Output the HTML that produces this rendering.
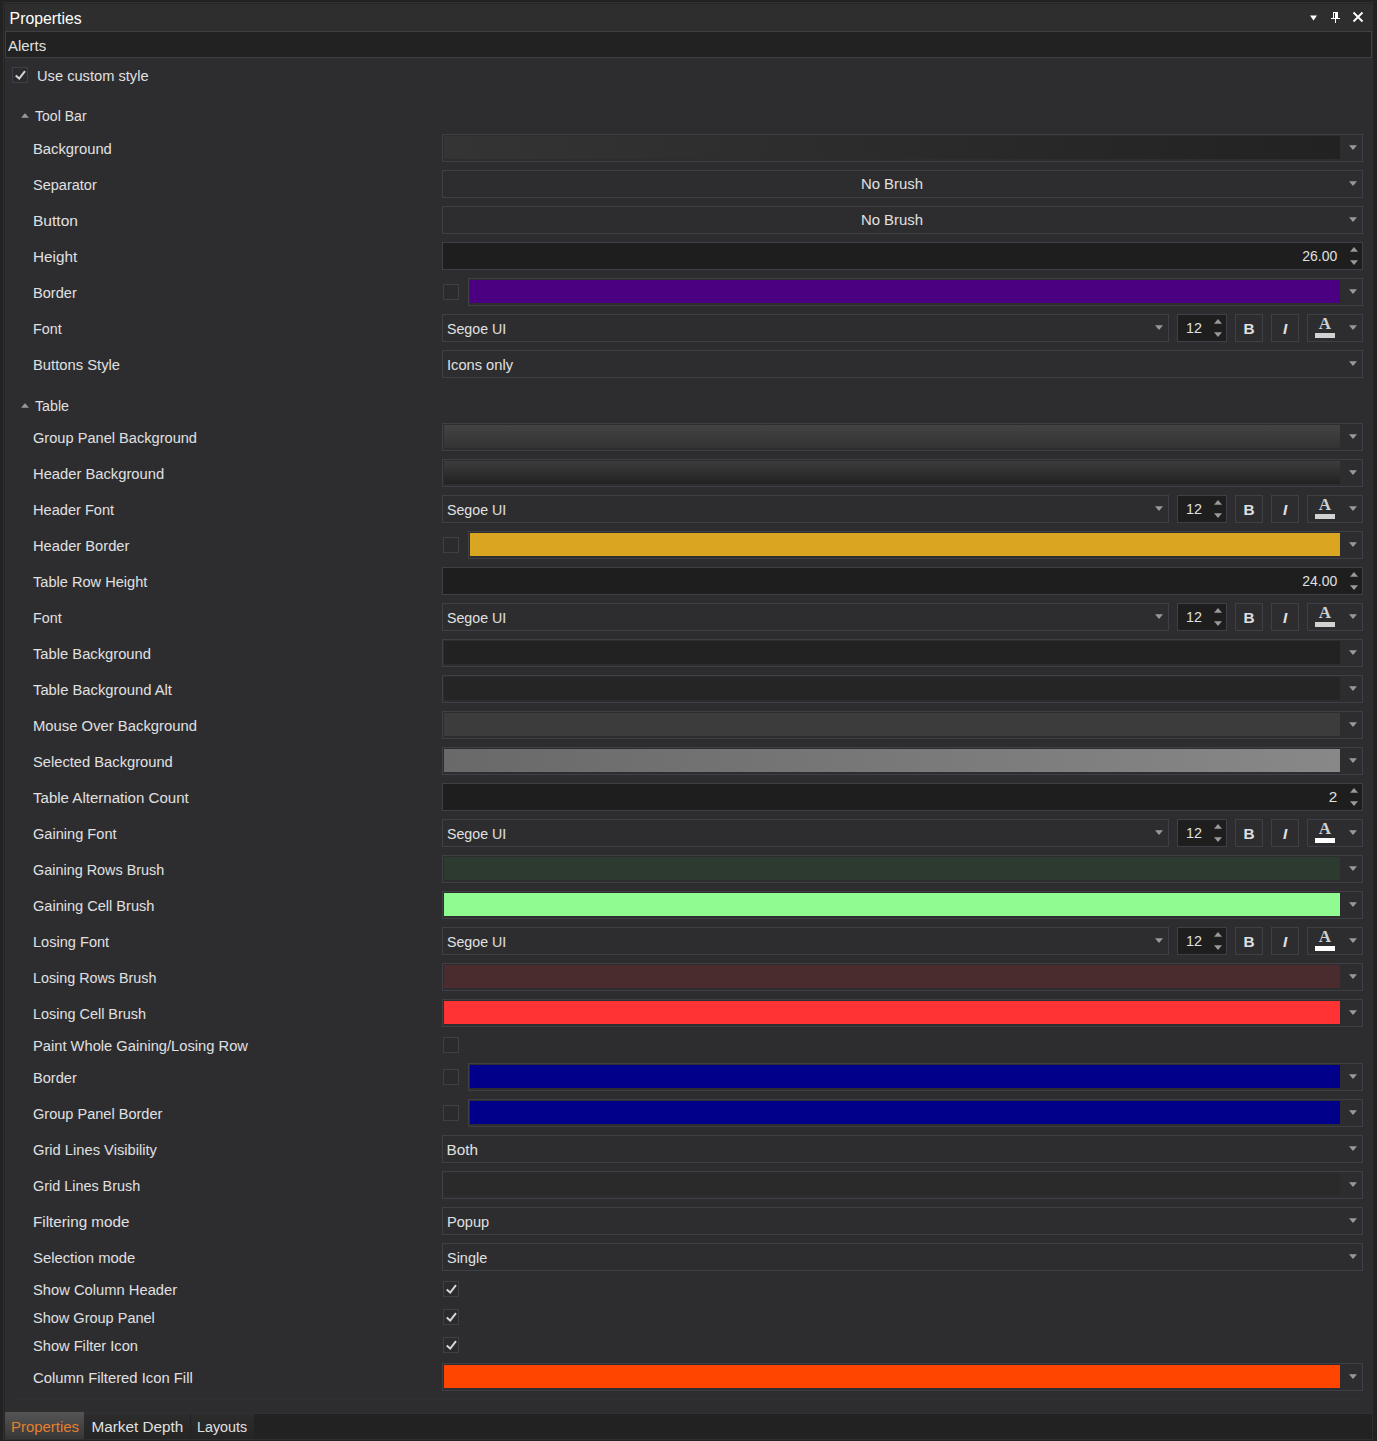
<!DOCTYPE html>
<html><head><meta charset="utf-8"><title>Properties</title>
<style>
html,body{margin:0;padding:0}
body{width:1377px;height:1441px;background:#222222;position:relative;overflow:hidden;
 font-family:"Liberation Sans",sans-serif;font-size:15.3px;color:#e0e0e0}
#fr{position:absolute;left:3px;top:2px;width:1368px;height:1436px;border:1px solid #2f2f2f;background:#2d2d30}
#in{position:absolute;left:4px;top:3px;width:1368px;height:1436px;border-left:1px solid #252525;border-top:1px solid #252525;box-sizing:border-box}
#tb{position:absolute;left:5px;top:4px;width:1367px;height:27px;background:#2e2e2e}
#tt{position:absolute;left:9.6px;top:5px;height:28px;line-height:28px;font-size:15.8px;color:#ffffff;transform-origin:0 50%;white-space:nowrap}
#al{position:absolute;left:5px;top:31px;width:1365px;height:25px;border:1px solid #3f3f46;background:#222222}
#al div{position:absolute;left:2px;top:0;line-height:27px;color:#e0e0e0;transform-origin:0 50%;white-space:nowrap}
.lb{position:absolute;height:28px;line-height:29px;white-space:nowrap;transform-origin:0 50%}
.bx{position:absolute;height:26px;border:1px solid #3f3f46}
.sp{background:#1e1e1e}
.sw{position:absolute;left:1px;top:1px;right:22px;bottom:2px}
.tx{position:absolute;left:3.5px;top:-0.3px;line-height:27px;white-space:nowrap;transform-origin:0 50%}
.ct{position:absolute;left:1px;right:22px;top:-1.3px;text-align:center;line-height:27px}
.rt{position:absolute;top:-0.6px;line-height:27px;transform-origin:100% 50%}
.bt{text-align:center;line-height:27px}
.fa{position:absolute;left:7px;width:20px;text-align:center;top:0px;font-family:"Liberation Serif",serif;font-weight:bold;font-size:17px;line-height:17px;color:#d0d0d0}
.fb{position:absolute;left:7px;top:18px;width:20px;height:5px;background:#d9d9d9}
.ad{position:absolute;display:block}
.cb{position:absolute;width:14px;height:14px;border:1px solid #3f3f46;background:#2b2b2e}
.cb svg{position:absolute;left:0;top:0}
#st{position:absolute;left:5px;top:1414px;width:1367px;height:25px;background:#222222}
#sl{position:absolute;left:5px;top:1413px;width:1367px;height:1px;background:#313134}
#bl{position:absolute;left:3px;top:1439px;width:1370px;height:1px;background:#2f2f2f}
.tab{position:absolute;top:1414px;height:25px;background:linear-gradient(#2c2c2c,#252525)}
.tab span{position:absolute;top:0;white-space:nowrap;transform-origin:0 50%}
#t1{left:5px;top:1412px;width:79px;height:27px;background:linear-gradient(#555555,#363636);color:#e57f2e}
#sepl{position:absolute;left:18px;top:1398px;width:1340px;height:2px;background:#303033}
</style></head><body>
<div id="fr"></div><div id="in"></div>
<div id="tb"></div><div id="tt" style="transform:scaleX(1.0000)">Properties</div>

<svg class="ad" style="left:1309px;top:14.5px" width="9" height="6" viewBox="0 0 9 6"><path d="M1 0.5H8L4.5 5.5Z" fill="#fff"/></svg>
<svg class="ad" style="left:1330px;top:11px" width="11" height="13" viewBox="0 0 11 13"><path d="M3 1H8V7H3Z M4 2V7H5V2Z" fill="#fff" fill-rule="evenodd"/><rect x="1" y="7" width="9" height="1" fill="#fff"/><rect x="5" y="8" width="1" height="4" fill="#fff"/></svg>
<svg class="ad" style="left:1352px;top:11px" width="12" height="12" viewBox="0 0 12 12"><path d="M1.5 1.5L10.5 10.5M10.5 1.5L1.5 10.5" stroke="#fff" stroke-width="1.8" fill="none"/></svg>
<div id="al"><div style="transform:scaleX(0.9744)">Alerts</div></div>
<div class="cb" style="left:12px;top:67px"><svg width="14" height="14" viewBox="0 0 14 14"><path d="M2.7 7.6L6.2 10.6L12 3.2" fill="none" stroke="#d6d6d6" stroke-width="2"/></svg></div>
<div class="lb" style="left:37px;top:61px;transform:scaleX(0.9578)">Use custom style</div>
<svg class="ad" style="left:21.3px;top:113px" width="8" height="5" viewBox="0 0 8 5"><path d="M0 4.8H8L4 0.3Z" fill="#999999"/></svg>
<div class="lb" style="left:35px;top:101px;transform:scaleX(0.9193)">Tool Bar</div>
<div class="lb" style="left:33.3px;top:134px;transform:scaleX(0.9654)">Background</div><div class="bx" style="left:442px;top:134px;width:919px"><div class="sw" style="background:linear-gradient(90deg,#343434,#222222)"></div></div><svg class="ad" style="left:1349px;top:145px" width="8" height="5" viewBox="0 0 8 5"><path d="M0 0.2H8L4 5Z" fill="#999999"/></svg>
<div class="lb" style="left:33.3px;top:170px;transform:scaleX(0.9493)">Separator</div><div class="bx" style="left:442px;top:170px;width:919px"><div class="ct" style="transform:scaleX(0.9758)">No Brush</div></div><svg class="ad" style="left:1349px;top:181px" width="8" height="5" viewBox="0 0 8 5"><path d="M0 0.2H8L4 5Z" fill="#999999"/></svg>
<div class="lb" style="left:33.3px;top:206px;transform:scaleX(1.0163)">Button</div><div class="bx" style="left:442px;top:206px;width:919px"><div class="ct" style="transform:scaleX(0.9758)">No Brush</div></div><svg class="ad" style="left:1349px;top:217px" width="8" height="5" viewBox="0 0 8 5"><path d="M0 0.2H8L4 5Z" fill="#999999"/></svg>
<div class="lb" style="left:33.3px;top:242px;transform:scaleX(0.9977)">Height</div><div class="bx sp" style="left:442px;top:242px;width:919px"><div class="rt" style="right:24.8px;transform:scaleX(0.9132)">26.00</div></div><svg class="ad" style="left:1350px;top:246.5px" width="8" height="5" viewBox="0 0 8 5"><path d="M0 4.8H8L4 0Z" fill="#999999"/></svg><svg class="ad" style="left:1350px;top:259.5px" width="8" height="5" viewBox="0 0 8 5"><path d="M0 0.2H8L4 5Z" fill="#999999"/></svg>
<div class="lb" style="left:33.3px;top:278px;transform:scaleX(0.9543)">Border</div><div class="cb" style="left:443px;top:284px"></div><div class="bx" style="left:468px;top:278px;width:893px"><div class="sw" style="background:#4b0082"></div></div><svg class="ad" style="left:1349px;top:289px" width="8" height="5" viewBox="0 0 8 5"><path d="M0 0.2H8L4 5Z" fill="#999999"/></svg>
<div class="lb" style="left:33.3px;top:314px;transform:scaleX(0.9355)">Font</div><div class="bx" style="left:442px;top:314px;width:725px"><div class="tx" style="transform:scaleX(0.9286)">Segoe UI</div></div><svg class="ad" style="left:1155px;top:325px" width="8" height="5" viewBox="0 0 8 5"><path d="M0 0.2H8L4 5Z" fill="#999999"/></svg><div class="bx sp" style="left:1177px;top:314px;width:48px"><div class="rt" style="right:24px;transform:scaleX(0.9375)">12</div></div><svg class="ad" style="left:1214px;top:318.5px" width="8" height="5" viewBox="0 0 8 5"><path d="M0 4.8H8L4 0Z" fill="#999999"/></svg><svg class="ad" style="left:1214px;top:331.5px" width="8" height="5" viewBox="0 0 8 5"><path d="M0 0.2H8L4 5Z" fill="#999999"/></svg><div class="bx bt" style="left:1235px;top:314px;width:26px"><b>B</b></div><div class="bx bt" style="left:1271px;top:314px;width:26px"><b><i>I</i></b></div><div class="bx" style="left:1307px;top:314px;width:54px"><div class="fa">A</div><div class="fb" style="background:#d2d2d2"></div></div><svg class="ad" style="left:1349px;top:325px" width="8" height="5" viewBox="0 0 8 5"><path d="M0 0.2H8L4 5Z" fill="#999999"/></svg>
<div class="lb" style="left:33.3px;top:350px;transform:scaleX(0.9663)">Buttons Style</div><div class="bx" style="left:442px;top:350px;width:919px"><div class="tx" style="transform:scaleX(0.9580)">Icons only</div></div><svg class="ad" style="left:1349px;top:361px" width="8" height="5" viewBox="0 0 8 5"><path d="M0 0.2H8L4 5Z" fill="#999999"/></svg>
<svg class="ad" style="left:21.3px;top:403px" width="8" height="5" viewBox="0 0 8 5"><path d="M0 4.8H8L4 0.3Z" fill="#999999"/></svg>
<div class="lb" style="left:35px;top:391px;transform:scaleX(0.9306)">Table</div>
<div class="lb" style="left:33.3px;top:423px;transform:scaleX(0.9547)">Group Panel Background</div><div class="bx" style="left:442px;top:423px;width:919px"><div class="sw" style="background:linear-gradient(180deg,#434343,#333333)"></div></div><svg class="ad" style="left:1349px;top:434px" width="8" height="5" viewBox="0 0 8 5"><path d="M0 0.2H8L4 5Z" fill="#999999"/></svg>
<div class="lb" style="left:33.3px;top:459px;transform:scaleX(0.9637)">Header Background</div><div class="bx" style="left:442px;top:459px;width:919px"><div class="sw" style="background:linear-gradient(180deg,#3c3c3c,#222222)"></div></div><svg class="ad" style="left:1349px;top:470px" width="8" height="5" viewBox="0 0 8 5"><path d="M0 0.2H8L4 5Z" fill="#999999"/></svg>
<div class="lb" style="left:33.3px;top:495px;transform:scaleX(0.9541)">Header Font</div><div class="bx" style="left:442px;top:495px;width:725px"><div class="tx" style="transform:scaleX(0.9286)">Segoe UI</div></div><svg class="ad" style="left:1155px;top:506px" width="8" height="5" viewBox="0 0 8 5"><path d="M0 0.2H8L4 5Z" fill="#999999"/></svg><div class="bx sp" style="left:1177px;top:495px;width:48px"><div class="rt" style="right:24px;transform:scaleX(0.9375)">12</div></div><svg class="ad" style="left:1214px;top:499.5px" width="8" height="5" viewBox="0 0 8 5"><path d="M0 4.8H8L4 0Z" fill="#999999"/></svg><svg class="ad" style="left:1214px;top:512.5px" width="8" height="5" viewBox="0 0 8 5"><path d="M0 0.2H8L4 5Z" fill="#999999"/></svg><div class="bx bt" style="left:1235px;top:495px;width:26px"><b>B</b></div><div class="bx bt" style="left:1271px;top:495px;width:26px"><b><i>I</i></b></div><div class="bx" style="left:1307px;top:495px;width:54px"><div class="fa">A</div><div class="fb" style="background:#d2d2d2"></div></div><svg class="ad" style="left:1349px;top:506px" width="8" height="5" viewBox="0 0 8 5"><path d="M0 0.2H8L4 5Z" fill="#999999"/></svg>
<div class="lb" style="left:33.3px;top:531px;transform:scaleX(0.9610)">Header Border</div><div class="cb" style="left:443px;top:537px"></div><div class="bx" style="left:468px;top:531px;width:893px"><div class="sw" style="background:#daa520"></div></div><svg class="ad" style="left:1349px;top:542px" width="8" height="5" viewBox="0 0 8 5"><path d="M0 0.2H8L4 5Z" fill="#999999"/></svg>
<div class="lb" style="left:33.3px;top:567px;transform:scaleX(0.9537)">Table Row Height</div><div class="bx sp" style="left:442px;top:567px;width:919px"><div class="rt" style="right:24.8px;transform:scaleX(0.9132)">24.00</div></div><svg class="ad" style="left:1350px;top:571.5px" width="8" height="5" viewBox="0 0 8 5"><path d="M0 4.8H8L4 0Z" fill="#999999"/></svg><svg class="ad" style="left:1350px;top:584.5px" width="8" height="5" viewBox="0 0 8 5"><path d="M0 0.2H8L4 5Z" fill="#999999"/></svg>
<div class="lb" style="left:33.3px;top:603px;transform:scaleX(0.9355)">Font</div><div class="bx" style="left:442px;top:603px;width:725px"><div class="tx" style="transform:scaleX(0.9286)">Segoe UI</div></div><svg class="ad" style="left:1155px;top:614px" width="8" height="5" viewBox="0 0 8 5"><path d="M0 0.2H8L4 5Z" fill="#999999"/></svg><div class="bx sp" style="left:1177px;top:603px;width:48px"><div class="rt" style="right:24px;transform:scaleX(0.9375)">12</div></div><svg class="ad" style="left:1214px;top:607.5px" width="8" height="5" viewBox="0 0 8 5"><path d="M0 4.8H8L4 0Z" fill="#999999"/></svg><svg class="ad" style="left:1214px;top:620.5px" width="8" height="5" viewBox="0 0 8 5"><path d="M0 0.2H8L4 5Z" fill="#999999"/></svg><div class="bx bt" style="left:1235px;top:603px;width:26px"><b>B</b></div><div class="bx bt" style="left:1271px;top:603px;width:26px"><b><i>I</i></b></div><div class="bx" style="left:1307px;top:603px;width:54px"><div class="fa">A</div><div class="fb" style="background:#d2d2d2"></div></div><svg class="ad" style="left:1349px;top:614px" width="8" height="5" viewBox="0 0 8 5"><path d="M0 0.2H8L4 5Z" fill="#999999"/></svg>
<div class="lb" style="left:33.3px;top:639px;transform:scaleX(0.9631)">Table Background</div><div class="bx" style="left:442px;top:639px;width:919px"><div class="sw" style="background:#222222"></div></div><svg class="ad" style="left:1349px;top:650px" width="8" height="5" viewBox="0 0 8 5"><path d="M0 0.2H8L4 5Z" fill="#999999"/></svg>
<div class="lb" style="left:33.3px;top:675px;transform:scaleX(0.9669)">Table Background Alt</div><div class="bx" style="left:442px;top:675px;width:919px"><div class="sw" style="background:#252525"></div></div><svg class="ad" style="left:1349px;top:686px" width="8" height="5" viewBox="0 0 8 5"><path d="M0 0.2H8L4 5Z" fill="#999999"/></svg>
<div class="lb" style="left:33.3px;top:711px;transform:scaleX(0.9690)">Mouse Over Background</div><div class="bx" style="left:442px;top:711px;width:919px"><div class="sw" style="background:#3c3c3c"></div></div><svg class="ad" style="left:1349px;top:722px" width="8" height="5" viewBox="0 0 8 5"><path d="M0 0.2H8L4 5Z" fill="#999999"/></svg>
<div class="lb" style="left:33.3px;top:747px;transform:scaleX(0.9611)">Selected Background</div><div class="bx" style="left:442px;top:747px;width:919px"><div class="sw" style="background:linear-gradient(90deg,#696969,#888888)"></div></div><svg class="ad" style="left:1349px;top:758px" width="8" height="5" viewBox="0 0 8 5"><path d="M0 0.2H8L4 5Z" fill="#999999"/></svg>
<div class="lb" style="left:33.3px;top:783px;transform:scaleX(0.9843)">Table Alternation Count</div><div class="bx sp" style="left:442px;top:783px;width:919px"><div class="rt" style="right:24.8px">2</div></div><svg class="ad" style="left:1350px;top:787.5px" width="8" height="5" viewBox="0 0 8 5"><path d="M0 4.8H8L4 0Z" fill="#999999"/></svg><svg class="ad" style="left:1350px;top:800.5px" width="8" height="5" viewBox="0 0 8 5"><path d="M0 0.2H8L4 5Z" fill="#999999"/></svg>
<div class="lb" style="left:33.3px;top:819px;transform:scaleX(0.9539)">Gaining Font</div><div class="bx" style="left:442px;top:819px;width:725px"><div class="tx" style="transform:scaleX(0.9286)">Segoe UI</div></div><svg class="ad" style="left:1155px;top:830px" width="8" height="5" viewBox="0 0 8 5"><path d="M0 0.2H8L4 5Z" fill="#999999"/></svg><div class="bx sp" style="left:1177px;top:819px;width:48px"><div class="rt" style="right:24px;transform:scaleX(0.9375)">12</div></div><svg class="ad" style="left:1214px;top:823.5px" width="8" height="5" viewBox="0 0 8 5"><path d="M0 4.8H8L4 0Z" fill="#999999"/></svg><svg class="ad" style="left:1214px;top:836.5px" width="8" height="5" viewBox="0 0 8 5"><path d="M0 0.2H8L4 5Z" fill="#999999"/></svg><div class="bx bt" style="left:1235px;top:819px;width:26px"><b>B</b></div><div class="bx bt" style="left:1271px;top:819px;width:26px"><b><i>I</i></b></div><div class="bx" style="left:1307px;top:819px;width:54px"><div class="fa">A</div><div class="fb" style="background:#ffffff"></div></div><svg class="ad" style="left:1349px;top:830px" width="8" height="5" viewBox="0 0 8 5"><path d="M0 0.2H8L4 5Z" fill="#999999"/></svg>
<div class="lb" style="left:33.3px;top:855px;transform:scaleX(0.9417)">Gaining Rows Brush</div><div class="bx" style="left:442px;top:855px;width:919px"><div class="sw" style="background:#2d3a30"></div></div><svg class="ad" style="left:1349px;top:866px" width="8" height="5" viewBox="0 0 8 5"><path d="M0 0.2H8L4 5Z" fill="#999999"/></svg>
<div class="lb" style="left:33.3px;top:891px;transform:scaleX(0.9520)">Gaining Cell Brush</div><div class="bx" style="left:442px;top:891px;width:919px"><div class="sw" style="background:#90fb90"></div></div><svg class="ad" style="left:1349px;top:902px" width="8" height="5" viewBox="0 0 8 5"><path d="M0 0.2H8L4 5Z" fill="#999999"/></svg>
<div class="lb" style="left:33.3px;top:927px;transform:scaleX(0.9525)">Losing Font</div><div class="bx" style="left:442px;top:927px;width:725px"><div class="tx" style="transform:scaleX(0.9286)">Segoe UI</div></div><svg class="ad" style="left:1155px;top:938px" width="8" height="5" viewBox="0 0 8 5"><path d="M0 0.2H8L4 5Z" fill="#999999"/></svg><div class="bx sp" style="left:1177px;top:927px;width:48px"><div class="rt" style="right:24px;transform:scaleX(0.9375)">12</div></div><svg class="ad" style="left:1214px;top:931.5px" width="8" height="5" viewBox="0 0 8 5"><path d="M0 4.8H8L4 0Z" fill="#999999"/></svg><svg class="ad" style="left:1214px;top:944.5px" width="8" height="5" viewBox="0 0 8 5"><path d="M0 0.2H8L4 5Z" fill="#999999"/></svg><div class="bx bt" style="left:1235px;top:927px;width:26px"><b>B</b></div><div class="bx bt" style="left:1271px;top:927px;width:26px"><b><i>I</i></b></div><div class="bx" style="left:1307px;top:927px;width:54px"><div class="fa">A</div><div class="fb" style="background:#ffffff"></div></div><svg class="ad" style="left:1349px;top:938px" width="8" height="5" viewBox="0 0 8 5"><path d="M0 0.2H8L4 5Z" fill="#999999"/></svg>
<div class="lb" style="left:33.3px;top:963px;transform:scaleX(0.9359)">Losing Rows Brush</div><div class="bx" style="left:442px;top:963px;width:919px"><div class="sw" style="background:#4a2c2e"></div></div><svg class="ad" style="left:1349px;top:974px" width="8" height="5" viewBox="0 0 8 5"><path d="M0 0.2H8L4 5Z" fill="#999999"/></svg>
<div class="lb" style="left:33.3px;top:999px;transform:scaleX(0.9429)">Losing Cell Brush</div><div class="bx" style="left:442px;top:999px;width:919px"><div class="sw" style="background:#ff3333"></div></div><svg class="ad" style="left:1349px;top:1010px" width="8" height="5" viewBox="0 0 8 5"><path d="M0 0.2H8L4 5Z" fill="#999999"/></svg>
<div class="lb" style="left:33.3px;top:1031px;transform:scaleX(0.9612)">Paint Whole Gaining/Losing Row</div><div class="cb" style="left:443px;top:1037px"></div>
<div class="lb" style="left:33.3px;top:1063px;transform:scaleX(0.9543)">Border</div><div class="cb" style="left:443px;top:1069px"></div><div class="bx" style="left:468px;top:1063px;width:893px"><div class="sw" style="background:#00008b"></div></div><svg class="ad" style="left:1349px;top:1074px" width="8" height="5" viewBox="0 0 8 5"><path d="M0 0.2H8L4 5Z" fill="#999999"/></svg>
<div class="lb" style="left:33.3px;top:1099px;transform:scaleX(0.9511)">Group Panel Border</div><div class="cb" style="left:443px;top:1105px"></div><div class="bx" style="left:468px;top:1099px;width:893px"><div class="sw" style="background:#00008b"></div></div><svg class="ad" style="left:1349px;top:1110px" width="8" height="5" viewBox="0 0 8 5"><path d="M0 0.2H8L4 5Z" fill="#999999"/></svg>
<div class="lb" style="left:33.3px;top:1135px;transform:scaleX(0.9615)">Grid Lines Visibility</div><div class="bx" style="left:442px;top:1135px;width:919px"><div class="tx" style="">Both</div></div><svg class="ad" style="left:1349px;top:1146px" width="8" height="5" viewBox="0 0 8 5"><path d="M0 0.2H8L4 5Z" fill="#999999"/></svg>
<div class="lb" style="left:33.3px;top:1171px;transform:scaleX(0.9412)">Grid Lines Brush</div><div class="bx" style="left:442px;top:1171px;width:919px"><div class="sw" style="background:#2a2a2a"></div></div><svg class="ad" style="left:1349px;top:1182px" width="8" height="5" viewBox="0 0 8 5"><path d="M0 0.2H8L4 5Z" fill="#999999"/></svg>
<div class="lb" style="left:33.3px;top:1207px;transform:scaleX(0.9948)">Filtering mode</div><div class="bx" style="left:442px;top:1207px;width:919px"><div class="tx" style="transform:scaleX(0.9545)">Popup</div></div><svg class="ad" style="left:1349px;top:1218px" width="8" height="5" viewBox="0 0 8 5"><path d="M0 0.2H8L4 5Z" fill="#999999"/></svg>
<div class="lb" style="left:33.3px;top:1243px;transform:scaleX(0.9695)">Selection mode</div><div class="bx" style="left:442px;top:1243px;width:919px"><div class="tx" style="transform:scaleX(0.9452)">Single</div></div><svg class="ad" style="left:1349px;top:1254px" width="8" height="5" viewBox="0 0 8 5"><path d="M0 0.2H8L4 5Z" fill="#999999"/></svg>
<div class="lb" style="left:33.3px;top:1275px;transform:scaleX(0.9631)">Show Column Header</div><div class="cb" style="left:443px;top:1281px"><svg width="14" height="14" viewBox="0 0 14 14"><path d="M2.7 7.6L6.2 10.6L12 3.2" fill="none" stroke="#d6d6d6" stroke-width="2"/></svg></div>
<div class="lb" style="left:33.3px;top:1303px;transform:scaleX(0.9488)">Show Group Panel</div><div class="cb" style="left:443px;top:1309px"><svg width="14" height="14" viewBox="0 0 14 14"><path d="M2.7 7.6L6.2 10.6L12 3.2" fill="none" stroke="#d6d6d6" stroke-width="2"/></svg></div>
<div class="lb" style="left:33.3px;top:1331px;transform:scaleX(0.9569)">Show Filter Icon</div><div class="cb" style="left:443px;top:1337px"><svg width="14" height="14" viewBox="0 0 14 14"><path d="M2.7 7.6L6.2 10.6L12 3.2" fill="none" stroke="#d6d6d6" stroke-width="2"/></svg></div>
<div class="lb" style="left:33.3px;top:1363px;transform:scaleX(0.9685)">Column Filtered Icon Fill</div><div class="bx" style="left:442px;top:1363px;width:919px"><div class="sw" style="background:#ff4500"></div></div><svg class="ad" style="left:1349px;top:1374px" width="8" height="5" viewBox="0 0 8 5"><path d="M0 0.2H8L4 5Z" fill="#999999"/></svg>
<div id="sepl"></div>
<div id="sl"></div><div id="st"></div><div id="bl"></div>
<div class="tab" id="t1"><span style="left:6px;line-height:29px;transform:scaleX(0.9750)">Properties</span></div>
<div class="tab" style="left:84px;width:106px"><span style="left:7.5px;line-height:26px;transform:scaleX(1.0000)">Market Depth</span></div>
<div class="tab" style="left:191px;width:63px"><span style="left:6px;line-height:26px;transform:scaleX(0.9340)">Layouts</span></div>
</body></html>
